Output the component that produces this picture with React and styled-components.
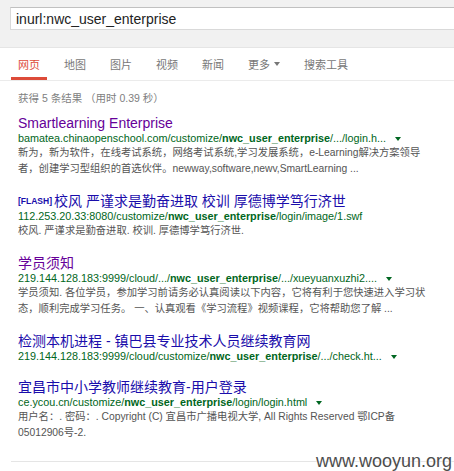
import React from "react";
import styled, { createGlobalStyle } from "styled-components";

const Global = createGlobalStyle`
  html, body { margin: 0; padding: 0; background: #fff; }
  body { font-family: "Liberation Sans", Arial, "Noto Sans CJK SC", sans-serif; }
  * { box-sizing: border-box; }
`;

const Page = styled.div`
  position: relative;
  width: 454px;
  height: 471px;
  overflow: hidden;
  background: #fff;
`;

const Header = styled.div`
  height: 48px;
  background: #f1f1f1;
  border-bottom: 1px solid #e5e5e5;
  padding: 7px 0 0 10px;
  overflow: hidden;
`;

const SearchBox = styled.div`
  width: 470px;
  height: 23px;
  background: #fff;
  border: 1px solid #d9d9d9;
  border-top-color: #c0c0c0;
  display: flex;
  align-items: center;
  padding-left: 5px;
  font-family: "Liberation Sans", Arial, sans-serif;
  font-size: 14px;
  color: #222;
`;

const Tabs = styled.nav`
  display: flex;
  height: 33px;
  padding-left: 11px;
  border-bottom: 1px solid #ebebeb;
  gap: 10px;
`;

const Tab = styled.div`
  display: flex;
  align-items: center;
  height: 32px;
  padding: 3px 7px 0;
  font-family: "Noto Sans CJK SC", sans-serif;
  font-size: 11px;
  color: ${(p) => (p.$active ? "#dd4b39" : "#777")};
  border-bottom: 3px solid ${(p) => (p.$active ? "#dd4b39" : "transparent")};
`;

const Caret = styled.span`
  display: inline-block;
  width: 0;
  height: 0;
  margin-left: ${(p) => p.$gap || 4}px;
  border-left: 3px solid transparent;
  border-right: 3px solid transparent;
  border-top: 4px solid ${(p) => p.$color || "#777"};
  vertical-align: middle;
`;

const Content = styled.div`
  padding-left: 18px;
`;

const Stats = styled.div`
  margin-top: 9px;
  line-height: 16px;
  font-family: "Liberation Sans", "Noto Sans CJK SC", sans-serif;
  font-size: 10.5px;
  color: #808080;
`;

const Results = styled.div`
  margin-top: 9px;
`;

const Result = styled.div`
  margin-bottom: ${(p) => (p.$last ? "0" : "16px")};
`;

const Title = styled.div`
  font-family: "Liberation Sans", "Noto Sans CJK SC", sans-serif;
  font-size: 14px;
  line-height: 16px;
  white-space: nowrap;
  color: ${(p) => (p.$visited ? "#660099" : "#1a0dab")};
`;

const Tag = styled.span`
  font-family: "Liberation Sans", sans-serif;
  font-size: 8.5px;
  font-weight: bold;
  color: #1a0dab;
  margin-right: 2px;
  vertical-align: 2px;
`;

const Url = styled.div`
  font-family: "Liberation Sans", sans-serif;
  font-size: 10.8px;
  line-height: 14px;
  color: #006621;
  white-space: nowrap;
  b { font-weight: bold; }
`;

const Snippet = styled.div`
  font-family: "Liberation Sans", "Noto Sans CJK SC", sans-serif;
  font-size: 10.3px;
  line-height: 16px;
  color: #545454;
`;

const Line = styled.span`
  display: block;
  white-space: nowrap;
`;

const Footer = styled.div`
  margin: 20px 0 0 11px;
  border-top: 1px solid #e5e5e5;
`;

const Watermark = styled.div`
  position: absolute;
  right: 2px;
  bottom: 0px;
  font-family: "Liberation Sans", sans-serif;
  font-size: 18px;
  line-height: 20px;
  color: #4d4d4d;
  text-shadow: 0 0 2px #fff, 0 0 2px #fff;
`;

const tabs = ["网页", "地图", "图片", "视频", "新闻"];

const results = [
  {
    visited: true,
    title: "Smartlearning Enterprise",
    url: ["bamatea.chinaopenschool.com/customize/", "/.../login.h..."],
    arrow: true,
    lines: [
      "新为，新为软件，在线考试系统，网络考试系统,学习发展系统，e-Learning解决方案领导",
      "者，创建学习型组织的首选伙伴。newway,software,newv,SmartLearning ...",
    ],
  },
  {
    tag: "[FLASH]",
    title: "校风 严谨求是勤奋进取 校训 厚德博学笃行济世",
    url: ["112.253.20.33:8080/customize/", "/login/image/1.swf"],
    lines: ["校风. 严谨求是勤奋进取. 校训. 厚德博学笃行济世."],
  },
  {
    visited: true,
    title: "学员须知",
    url: ["219.144.128.183:9999/cloud/.../", "/.../xueyuanxuzhi2...."],
    arrow: true,
    lines: [
      "学员须知. 各位学员，参加学习前请务必认真阅读以下内容，它将有利于您快速进入学习状",
      "态，顺利完成学习任务。 一、认真观看《学习流程》视频课程，它将帮助您了解 ...",
    ],
  },
  {
    title: "检测本机进程 - 镇巴县专业技术人员继续教育网",
    url: ["219.144.128.183:9999/cloud/customize/", "/.../check.ht..."],
    arrow: true,
    lines: [],
  },
  {
    title: "宜昌市中小学教师继续教育-用户登录",
    url: ["ce.ycou.cn/customize/", "/login/login.html"],
    arrow: true,
    lines: [
      "用户名：. 密码：. Copyright (C) 宜昌市广播电视大学, All Rights Reserved 鄂ICP备",
      "05012906号-2.",
    ],
  },
];

export default function App() {
  return (
    <Page>
      <Global />
      <Header>
        <SearchBox>inurl:nwc_user_enterprise</SearchBox>
      </Header>
      <Tabs>
        {tabs.map((t, i) => (
          <Tab key={t} $active={i === 0}>
            {t}
          </Tab>
        ))}
        <Tab>
          更多
          <Caret />
        </Tab>
        <Tab>搜索工具</Tab>
      </Tabs>
      <Content>
        <Stats>获得 5 条结果 （用时 0.39 秒）</Stats>
        <Results>
          {results.map((r, i) => (
            <Result key={i} $last={i === results.length - 1}>
              <Title $visited={r.visited}>
                {r.tag && <Tag>{r.tag}</Tag>}
                {r.title}
              </Title>
              <Url>
                {r.url[0]}
                <b>nwc_user_enterprise</b>
                {r.url[1]}
                {r.arrow && <Caret $color="#006621" $gap={9} />}
              </Url>
              {r.lines.length > 0 && (
                <Snippet>
                  {r.lines.map((l, j) => (
                    <Line key={j}>{l}</Line>
                  ))}
                </Snippet>
              )}
            </Result>
          ))}
        </Results>
      </Content>
      <Footer />
      <Watermark>www.wooyun.org</Watermark>
    </Page>
  );
}
